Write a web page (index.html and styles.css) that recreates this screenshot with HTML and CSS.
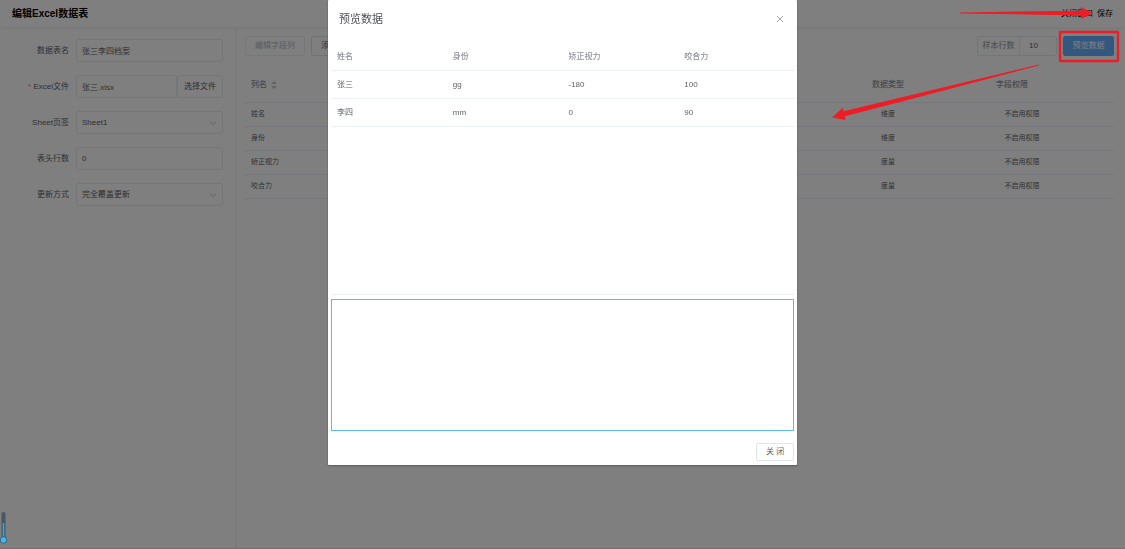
FILE: index.html
```html
<!DOCTYPE html>
<html lang="zh-CN">
<head>
<meta charset="utf-8">
<title>编辑Excel数据表</title>
<link rel="stylesheet" href="styles.css">
</head>
<body>
<div class="page">
  <header class="topbar">
    <h1 class="topbar-title">编辑Excel数据表</h1>
    <nav class="topbar-actions">
      <button type="button" class="text-button">关闭窗口</button>
      <button type="button" class="text-button">保存</button>
    </nav>
  </header>
  <div class="body">
    <form class="sidebar">
      <div class="field">
        <label class="label" for="name">数据表名</label>
        <input class="control" id="name" type="text" value="张三李四档案">
      </div>
      <div class="field">
        <label class="label" for="file"><span class="required">*</span> Excel文件</label>
        <div class="control-group">
          <input class="control" id="file" type="text" value="张三.xlsx">
          <button type="button" class="file-button">选择文件</button>
        </div>
      </div>
      <div class="field">
        <label class="label" for="sheet">Sheet页签</label>
        <div class="select-wrap">
          <select class="control" id="sheet"><option>Sheet1</option></select>
          <svg class="chevron" viewBox="0 0 8 8"><path d="M1 2.500 4 5.500 7 2.500"/></svg>
        </div>
      </div>
      <div class="field">
        <label class="label" for="head">表头行数</label>
        <input class="control" id="head" type="text" value="0">
      </div>
      <div class="field">
        <label class="label" for="mode">更新方式</label>
        <div class="select-wrap">
          <select class="control" id="mode"><option>完全覆盖更新</option></select>
          <svg class="chevron" viewBox="0 0 8 8"><path d="M1 2.500 4 5.500 7 2.500"/></svg>
        </div>
      </div>
    </form>
    <main class="content">
      <div class="toolbar">
        <button type="button" class="button" disabled>编辑字段列</button>
        <button type="button" class="button">添加字段</button>
        <div class="sample">
          <label class="sample-label" for="sample">样本行数</label>
          <input class="sample-input" id="sample" type="text" value="10">
        </div>
        <button type="button" class="button primary">预览数据</button>
      </div>
      <table class="columns">
        <colgroup><col><col class="col-type"><col class="col-auth"></colgroup>
        <thead>
          <tr>
            <th>列名 <svg class="sort" viewBox="0 0 6 8"><path d="M3 0 6 3H0zM3 8 0 5h6z"/></svg></th>
            <th>数据类型</th>
            <th class="auth-head">字段权限</th>
          </tr>
        </thead>
        <tbody>
          <tr><td>姓名</td><td>维度</td><td>不启用权限</td></tr>
          <tr><td>身份</td><td>维度</td><td>不启用权限</td></tr>
          <tr><td>矫正视力</td><td>度量</td><td>不启用权限</td></tr>
          <tr><td>咬合力</td><td>度量</td><td>不启用权限</td></tr>
        </tbody>
      </table>
    </main>
  </div>
</div>

<svg class="gauge" viewBox="0 0 8 34">
  <rect x="1.500" y="1" width="4" height="28" rx="2" fill="#44586a"/>
  <path d="M3.500 12v17" stroke="#2fa9e0" stroke-width="1.500"/>
  <circle cx="3.500" cy="29" r="3.500" fill="#35617a"/>
  <circle cx="3.500" cy="29" r="2.700" fill="#3dbcf0"/>
</svg>

<div class="overlay">
  <section class="dialog" role="dialog" aria-labelledby="dialog-title">
    <header class="dialog-head">
      <h2 class="dialog-title" id="dialog-title">预览数据</h2>
      <button type="button" class="close" aria-label="关闭"><svg class="close-icon" viewBox="0 0 8 8"><path d="M1 1 7 7M7 1 1 7"/></svg></button>
    </header>
    <div class="preview-box">
      <table class="preview">
        <thead><tr><th>姓名</th><th>身份</th><th>矫正视力</th><th>咬合力</th></tr></thead>
        <tbody>
          <tr><td>张三</td><td>gg</td><td>-180</td><td>100</td></tr>
          <tr><td>李四</td><td>mm</td><td>0</td><td>90</td></tr>
        </tbody>
      </table>
    </div>
    <textarea class="output" aria-label="输出"></textarea>
    <footer class="dialog-foot"><button type="button" class="button dialog-close">关 闭</button></footer>
  </section>
</div>

<svg class="marks" viewBox="825 0 300 125">
  <rect x="1060" y="32" width="58" height="29" rx="0.500" fill="none" stroke="#ee1c25" stroke-width="2.400"/>
  <path fill="#ee1c25" d="M960 12.400 1081 10.700V7l12 6.200L1081 19V15.400L960 13.400z"/>
  <path fill="#ee1c25" d="M1039 64.500 843.500 111.300l-.7-3.500L832 117.500l13.500 2.400-.8-3.600L900 102 1039 65.500z"/>
</svg>
</body>
</html>
```

FILE: styles.css
```css
* { box-sizing: border-box; }

body {
  margin: 0;
  background: #fff;
  color: #606266;
  font: 8px/12px "Liberation Sans", "Noto Sans CJK SC", sans-serif;
}

button, input, select, textarea {
  margin: 0;
  font: inherit;
  color: inherit;
}

.page {
  display: flex;
  flex-direction: column;
  min-height: 100vh;
  border-bottom: 1px solid #e4e4e4;
}

.topbar {
  display: flex;
  align-items: center;
  justify-content: space-between;
  height: 27px;
  padding: 0 12px;
  box-shadow: 0 1px 4px rgba(0, 0, 0, .08);
}

.topbar-title {
  margin: 0;
  color: #000;
  font-size: 10px;
  line-height: 16px;
}

.topbar-actions { display: flex; gap: 4px; }

.text-button {
  padding: 0;
  border: 0;
  background: none;
  color: #000;
}

.body { display: flex; flex: 1; }

.sidebar {
  display: flex;
  flex-direction: column;
  gap: 13px;
  width: 237px;
  padding: 12px 12px 12px 12px;
  border-right: 2px solid #f4f4f4;
}

.field {
  display: flex;
  align-items: center;
  gap: 7px;
  height: 23px;
}

.label { width: 57px; text-align: right; }
.required { color: #f56c6c; }

.control {
  flex: 1;
  width: 100%;
  min-width: 0;
  height: 23px;
  padding: 0 5px;
  border: 1px solid #ebedf1;
  border-radius: 2px;
  background: #fff;
  appearance: none;
}

.control-group, .select-wrap {
  display: flex;
  flex: 1;
  min-width: 0;
}

.select-wrap { position: relative; }

.chevron {
  position: absolute;
  right: 6px;
  top: 8px;
  width: 8px;
  height: 8px;
  fill: none;
  stroke: #c0c4cc;
}

.file-button {
  width: 46px;
  padding: 0;
  border: 1px solid #ebedf1;
  border-radius: 2px;
  background: #fff;
}

.content { flex: 1; padding: 9px 11px 9px 8px; }

.toolbar { display: flex; gap: 6px; }

.button {
  height: 20px;
  padding: 0 9px;
  border: 1px solid #e1e4ea;
  border-radius: 2px;
  background: #fff;
  white-space: nowrap;
}

.button:disabled { border-color: #ebeef5; color: #b4b8c0; }

.primary {
  width: 51px;
  padding: 0;
  border-color: #66b1ff;
  background: #66b1ff;
  color: #fff;
}

.sample {
  display: flex;
  width: 80px;
  margin-left: auto;
  border: 1px solid #e9ebf0;
  border-radius: 2px;
}

.sample-label {
  width: 42px;
  border-right: 1px solid #e9ebf0;
  color: #909399;
  line-height: 18px;
  text-align: center;
}

.sample-input {
  flex: 1;
  min-width: 0;
  padding: 0 9px;
  border: 0;
  background: none;
}

.columns, .preview {
  width: 100%;
  border-collapse: collapse;
  table-layout: fixed;
}

.columns { margin-top: 10px; font-size: 7px; }

.columns th, .columns td {
  height: 24px;
  padding: 0;
  border-bottom: 1px solid #ebeef5;
  text-align: center;
}

.columns th {
  height: 36px;
  padding-top: 2px;
  color: #909399;
  font-size: 8px;
  font-weight: 500;
}

.columns th:first-child, .columns td:first-child {
  padding-left: 6px;
  text-align: left;
}

.columns .auth-head { padding-right: 20px; }
.col-type { width: 84px; }
.col-auth { width: 184px; }

.sort {
  width: 6px;
  height: 8px;
  margin-left: 2px;
  fill: #c0c4cc;
  vertical-align: middle;
}

.gauge {
  position: fixed;
  left: 0;
  bottom: 4px;
  width: 8px;
  height: 34px;
  z-index: 3;
}

.overlay {
  position: fixed;
  inset: 0;
  z-index: 2;
  display: flex;
  align-items: flex-start;
  justify-content: center;
  background: rgba(0, 0, 0, .5);
}

.dialog {
  display: flex;
  flex-direction: column;
  width: 469px;
  padding: 0 3px 4px;
  border-radius: 1px;
  background: #fff;
  box-shadow: 0 1px 2px rgba(0, 0, 0, .3);
}

.dialog-head {
  display: flex;
  align-items: center;
  justify-content: space-between;
  height: 42px;
  padding: 0 10px 4px 8px;
}

.dialog-title {
  margin: 0;
  color: #505256;
  font-size: 11px;
  font-weight: 400;
  line-height: 16px;
}

.close {
  display: flex;
  padding: 0;
  border: 0;
  background: none;
}

.close-icon {
  width: 8px;
  height: 8px;
  fill: none;
  stroke: #a4a7ad;
}

.preview-box { height: 253px; border-bottom: 1px solid #ebeef5; }

.preview th, .preview td {
  height: 28px;
  padding: 2px 6px 0;
  border-bottom: 1px solid #ebeef5;
  text-align: left;
}

.preview th { color: #909399; font-weight: 500; }

.output {
  height: 132px;
  margin-top: 4px;
  border: 1px solid #5cbbe8;
  background: #fff;
  resize: none;
}

.dialog-foot {
  display: flex;
  justify-content: flex-end;
  padding-top: 12px;
}

.dialog-close { width: 38px; height: 18px; }

.marks {
  position: fixed;
  top: 0;
  right: 0;
  z-index: 4;
  width: 300px;
  height: 125px;
  pointer-events: none;
}
```
